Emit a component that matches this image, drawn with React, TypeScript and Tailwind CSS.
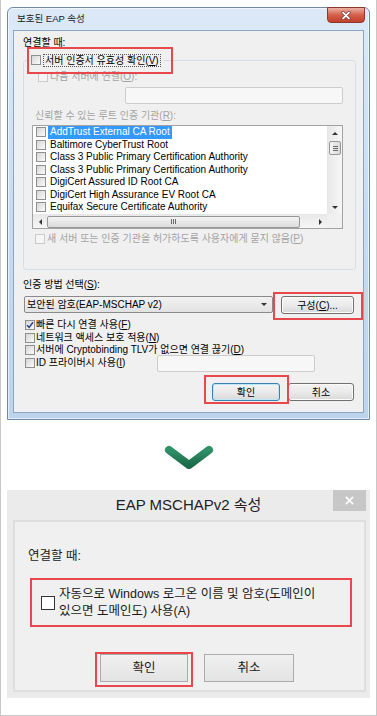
import React from "react";

const CERTS = [
  "AddTrust External CA Root",
  "Baltimore CyberTrust Root",
  "Class 3 Public Primary Certification Authority",
  "Class 3 Public Primary Certification Authority",
  "DigiCert Assured ID Root CA",
  "DigiCert High Assurance EV Root CA",
  "Equifax Secure Certificate Authority",
];

function Box7({ checked = false, disabled = false }: { checked?: boolean; disabled?: boolean }) {
  return (
    <span
      className={`flex h-[10px] w-[10px] shrink-0 items-center justify-center border ${
        disabled ? "border-[#cbcbcb] bg-[#f5f5f5]" : "border-[#8f8f8f] bg-gradient-to-br from-[#d6d6d6] to-[#fbfbfb]"
      }`}
    >
      {checked && (
        <svg viewBox="0 0 8 8" className="h-[8px] w-[8px]">
          <path d="M1 4.2 L3.2 6.4 L7 1.2" fill="none" stroke="#27468b" strokeWidth="1.5" />
        </svg>
      )}
    </span>
  );
}

function Btn7({ children, def = false, w }: { children: React.ReactNode; def?: boolean; w: string }) {
  return (
    <div
      className={`flex h-[18px] items-center justify-center rounded-[3px] border bg-gradient-to-b from-[#f3f3f3] via-[#ebebeb] to-[#d8d8d8] ${w} ${
        def ? "border-[#3c7fb1] shadow-[inset_0_0_0_1px_#bfe6fb]" : "border-[#707070] shadow-[inset_0_0_0_1px_#fbfbfb]"
      }`}
    >
      {children}
    </div>
  );
}

function Arrow({ dir }: { dir: "up" | "down" | "left" | "right" }) {
  if (dir === "up") return <span className="h-0 w-0 border-x-[3px] border-b-[3px] border-x-transparent border-b-[#333]" />;
  if (dir === "down") return <span className="h-0 w-0 border-x-[3px] border-t-[3px] border-x-transparent border-t-[#333]" />;
  if (dir === "left") return <span className="h-0 w-0 border-y-[3px] border-r-[3px] border-y-transparent border-r-[#333]" />;
  return <span className="h-0 w-0 border-y-[3px] border-l-[3px] border-y-transparent border-l-[#333]" />;
}

function CheckRow({ checked = false, children }: { checked?: boolean; children: React.ReactNode }) {
  return (
    <div className="flex h-[12.6px] items-center gap-[1px]">
      <Box7 checked={checked} />
      <span className="leading-[12px]">{children}</span>
    </div>
  );
}

function Win7Dialog() {
  return (
    <div className="ml-[6px] mt-[7px] flex h-[413px] w-[363px] flex-col rounded-t-[6px] border border-[#6f8aa8] bg-gradient-to-b from-[#dce9f7] via-[#c8dcf1] to-[#bdd4ed] px-[5px] pb-[6px] shadow-[inset_0_0_0_1px_rgba(255,255,255,0.6)]">
      {/* title bar */}
      <div className="relative flex h-[22px] shrink-0 items-center pl-[4px] text-[9.5px] text-[#1a1a1a]">
        보호된 EAP 속성
        <div className="absolute right-[-1px] top-[-1px] flex h-[16px] w-[38px] items-center justify-center rounded-b-[4px] border border-[#8a3b2e] bg-gradient-to-b from-[#eab0a3] via-[#d45f48] to-[#c23f2a]">
          <svg viewBox="0 0 10 9" className="h-[9px] w-[10px]">
            <path d="M2 1.5 L8 7.5 M8 1.5 L2 7.5" stroke="#5b1d14" strokeWidth="3" strokeLinecap="round" />
            <path d="M2 1.5 L8 7.5 M8 1.5 L2 7.5" stroke="#ffffff" strokeWidth="1.8" strokeLinecap="round" />
          </svg>
        </div>
      </div>

      {/* client area */}
      <div className="flex flex-1 flex-col border border-[#8ba5c3] bg-[#f0f0f0] text-[10px] text-black">
        <div className="mt-[6px] h-[12px] pl-[9px] leading-[12px]">연결할 때:</div>

        <div className="mt-[3px] pl-[9px]">
          <div className="relative z-10 ml-[8px] flex h-[16px] w-fit items-center gap-[2px] bg-[#f0f0f0] pr-[3px]">
            <Box7 />
            <span className="border border-dotted border-[#555] px-[1px] leading-[11px]">
              서버 인증서 유효성 확인(<u>V</u>)
            </span>
          </div>

          <div className="-mt-[8px] flex h-[210px] w-[333px] flex-col rounded-[3px] border border-[#d5dfe5] text-[#a3a3a3]">
            <div className="mt-[10px] flex h-[12px] items-center gap-[2px] pl-[14px]">
              <Box7 disabled />
              <span className="leading-[12px]">
                다음 서버에 연결(<u>O</u>):
              </span>
            </div>
            <div className="ml-[101px] mt-[4px] h-[17px] w-[218px] rounded-[2px] border border-[#cdcdcd] bg-[#f7f7f7]" />
            <div className="ml-[11px] mt-[6px] h-[12px] leading-[12px]">
              신뢰할 수 있는 루트 인증 기관(<u>R</u>):
            </div>

            {/* certificate list */}
            <div className="ml-[8px] mt-[3px] flex h-[104px] w-[311px] flex-col border border-[#a3a3a3] bg-white text-black">
              <div className="flex h-[88px]">
                <div className="flex flex-1 flex-col">
                  {CERTS.map((c, i) => (
                    <div key={i} className="flex h-[12.5px] items-center gap-[2px] pl-[3px]">
                      <Box7 />
                      <span
                        className={`whitespace-nowrap px-[2px] leading-[12.5px] ${
                          i === 0 ? "bg-[#3399ff] text-white" : ""
                        }`}
                      >
                        {c}
                      </span>
                    </div>
                  ))}
                </div>
                <div className="flex w-[15px] flex-col border-l border-[#e6e6e6] bg-gradient-to-r from-[#e9e9e9] to-[#f6f6f6]">
                  <div className="flex h-[14px] items-center justify-center">
                    <Arrow dir="up" />
                  </div>
                  <div className="mx-[1px] mt-[1px] flex h-[14px] flex-col items-center justify-center gap-[1px] rounded-[2px] border border-[#979797] bg-gradient-to-r from-[#f4f4f4] to-[#dadada]">
                    <span className="h-px w-[5px] bg-[#6a6a6a]" />
                    <span className="h-px w-[5px] bg-[#6a6a6a]" />
                    <span className="h-px w-[5px] bg-[#6a6a6a]" />
                  </div>
                  <div className="flex-1" />
                  <div className="flex h-[14px] items-center justify-center">
                    <Arrow dir="down" />
                  </div>
                </div>
              </div>
              <div className="flex h-[14px]">
                <div className="flex flex-1 items-center border-t border-[#e6e6e6] bg-gradient-to-b from-[#e9e9e9] to-[#f6f6f6]">
                  <div className="flex w-[14px] items-center justify-center">
                    <Arrow dir="left" />
                  </div>
                  <div className="flex h-[12px] w-[253px] items-center justify-center gap-[1px] rounded-[2px] border border-[#979797] bg-gradient-to-b from-[#f4f4f4] to-[#dadada]">
                    <span className="h-[5px] w-px bg-[#6a6a6a]" />
                    <span className="h-[5px] w-px bg-[#6a6a6a]" />
                    <span className="h-[5px] w-px bg-[#6a6a6a]" />
                  </div>
                  <div className="flex-1" />
                  <div className="flex w-[14px] items-center justify-center">
                    <Arrow dir="right" />
                  </div>
                </div>
                <div className="w-[15px] bg-[#f0f0f0]" />
              </div>
            </div>

            <div className="ml-[11px] mt-[4px] flex h-[12px] items-center gap-[2px]">
              <Box7 disabled />
              <span className="leading-[12px]">
                새 서버 또는 인증 기관을 허가하도록 사용자에게 묻지 않음(<u>P</u>)
              </span>
            </div>
          </div>
        </div>

        <div className="mt-[9px] h-[12px] pl-[9px] leading-[12px]">
          인증 방법 선택(<u>S</u>):
        </div>
        <div className="mt-[5px] flex h-[17px] pl-[10px]">
          <div className="flex w-[249px] items-center justify-between rounded-[2px] border border-[#8a8a8a] bg-gradient-to-b from-[#f2f2f2] to-[#e2e2e2] pl-[2px] pr-[5px]">
            <span className="leading-[12px]">보안된 암호(EAP-MSCHAP v2)</span>
            <Arrow dir="down" />
          </div>
          <div className="ml-[8px]">
            <Btn7 w="w-[73px]">
              <span>
                구성(<u>C</u>)...
              </span>
            </Btn7>
          </div>
        </div>

        <div className="mt-[6px] flex flex-col pl-[11px]">
          <CheckRow checked>
            빠른 다시 연결 사용(<u>F</u>)
          </CheckRow>
          <CheckRow>
            네트워크 액세스 보호 적용(<u>N</u>)
          </CheckRow>
          <CheckRow>
            서버에 Cryptobinding TLV가 없으면 연결 끊기(<u>D</u>)
          </CheckRow>
          <div className="flex h-[12.6px] items-center">
            <div className="flex w-[132px] items-center gap-[1px]">
              <Box7 />
              <span className="leading-[12px]">
                ID 프라이버시 사용(<u>I</u>)
              </span>
            </div>
            <div className="h-[17px] w-[158px] shrink-0 rounded-[2px] border border-[#cdcdcd] bg-[#f7f7f7]" />
          </div>
        </div>

        <div className="mt-[14px] flex justify-end gap-[8px] pr-[9px]">
          <Btn7 w="w-[68px]" def>
            확인
          </Btn7>
          <Btn7 w="w-[66px]">취소</Btn7>
        </div>
      </div>
    </div>
  );
}

function Win8Dialog() {
  return (
    <div className="ml-[6px] mt-[20px] flex h-[208px] w-[363px] flex-col bg-[#ebebeb] pb-[6px]">
      <div className="relative flex h-[30px] shrink-0 items-center justify-center text-[15px] text-[#222]">
        EAP MSCHAPv2 속성
        <div className="absolute right-[4px] top-0 flex h-[21px] w-[33px] items-center justify-center bg-[#c7c7c7]">
          <svg viewBox="0 0 10 10" className="h-[9px] w-[9px]">
            <path d="M1 1 L9 9 M9 1 L1 9" stroke="#ffffff" strokeWidth="1.8" />
          </svg>
        </div>
      </div>
      <div className="ml-[6px] flex h-[172px] w-[353px] flex-col border-2 border-[#dedede] bg-[#f0f0f0] text-[12.5px] text-[#1a1a1a]">
        <div className="mt-[27px] pl-[13px] leading-[15px]">연결할 때:</div>
        <div className="ml-[26px] mt-[22px] flex items-center gap-[4px]">
          <span className="h-[14px] w-[14px] shrink-0 border border-[#333] bg-white" />
          <span className="whitespace-nowrap leading-[17px]">
            자동으로 Windows 로그온 이름 및 암호(도메인이
            <br />
            있으면 도메인도) 사용(A)
          </span>
        </div>
        <div className="ml-[85px] mt-[34px] flex gap-[16px]">
          <div className="flex h-[28px] w-[88px] items-center justify-center border border-[#acacac] bg-gradient-to-b from-[#f0f0f0] to-[#e3e3e3]">
            확인
          </div>
          <div className="flex h-[28px] w-[90px] items-center justify-center border border-[#acacac] bg-gradient-to-b from-[#f0f0f0] to-[#e3e3e3]">
            취소
          </div>
        </div>
      </div>
    </div>
  );
}

export default function App() {
  return (
    <div className="relative flex h-[716px] w-[377px] flex-col border-x border-b border-[#c8c8c8] bg-white font-['Liberation_Sans','Noto_Sans_CJK_KR',sans-serif]">
      <Win7Dialog />

      <div className="mx-auto mt-[25px] h-[25px] w-[50px]">
        <svg viewBox="0 0 50 25" className="h-[25px] w-[50px]">
          <defs>
            <linearGradient id="chev" x1="0" y1="0" x2="0" y2="1">
              <stop offset="0" stopColor="#2f9167" />
              <stop offset="1" stopColor="#1c6c4a" />
            </linearGradient>
          </defs>
          <path d="M5 5 L25 20 L45 5" fill="none" stroke="url(#chev)" strokeWidth="8" strokeLinecap="round" strokeLinejoin="round" />
        </svg>
      </div>

      <Win8Dialog />

      {/* red annotation boxes */}
      <div className="pointer-events-none absolute left-[26px] top-[47px] h-[27px] w-[146px] border-2 border-[#e8484b]" />
      <div className="pointer-events-none absolute left-[272px] top-[292px] h-[28px] w-[90px] border-2 border-[#e8484b]" />
      <div className="pointer-events-none absolute left-[203px] top-[375px] h-[29px] w-[85px] border-2 border-[#e8484b]" />
      <div className="pointer-events-none absolute left-[29px] top-[578px] h-[49px] w-[322px] border-2 border-[#e8484b]" />
      <div className="pointer-events-none absolute left-[94px] top-[652px] h-[35px] w-[98px] border-2 border-[#e8484b]" />
    </div>
  );
}
